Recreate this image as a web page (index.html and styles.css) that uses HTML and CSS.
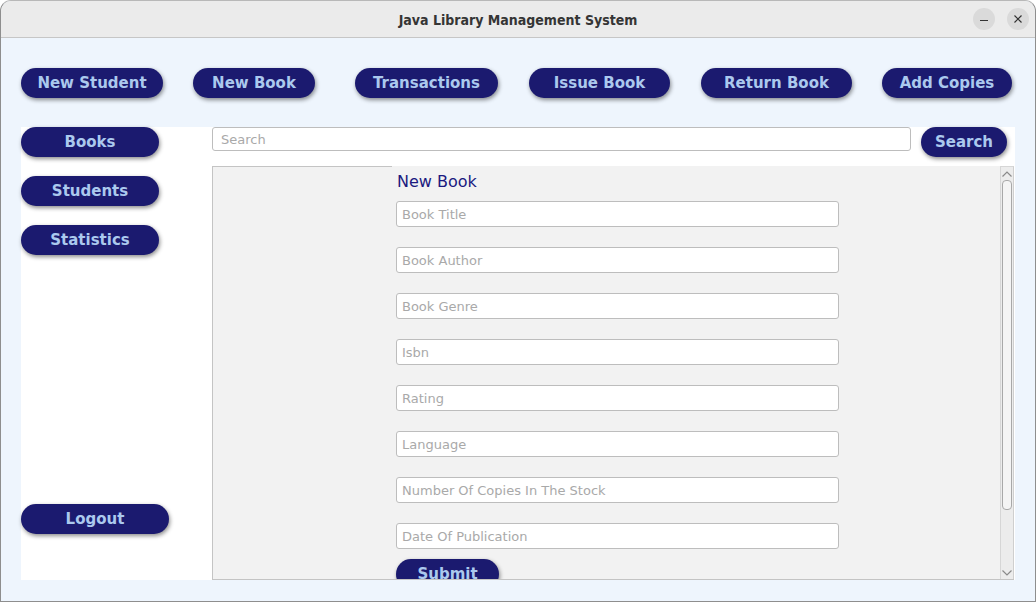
FILE: index.html
```html
<!DOCTYPE html>
<html>
<head>
<meta charset="utf-8">
<title>Java Library Management System</title>
<link rel="stylesheet" href="styles.css">
</head>
<body>
<div class="window">
  <div class="titlebar">
    <div class="title">Java Library Management System</div>
    <div class="winbtns">
      <span class="winbtn"><svg width="22" height="22" viewBox="0 0 22 22"><path d="M7 12.5h8" stroke="#333" stroke-width="1.2"/></svg></span>
      <span class="winbtn"><svg width="22" height="22" viewBox="0 0 22 22"><path d="M7.5 7.5l7 7M14.5 7.5l-7 7" stroke="#333" stroke-width="1.2"/></svg></span>
    </div>
  </div>
  <div class="content">
    <div class="topbar">
      <button class="btn w-student">New Student</button>
      <button class="btn w-book">New Book</button>
      <button class="btn w-trans">Transactions</button>
      <button class="btn w-issue">Issue Book</button>
      <button class="btn w-return">Return Book</button>
      <button class="btn w-copies">Add Copies</button>
    </div>
    <div class="panel">
      <div class="sidebar">
        <div class="side-top">
          <button class="btn w-side">Books</button>
          <button class="btn w-side">Students</button>
          <button class="btn w-side">Statistics</button>
        </div>
        <button class="btn w-logout">Logout</button>
      </div>
      <div class="main">
        <div class="search-row">
          <input class="search" type="text" placeholder="Search">
          <button class="btn w-search">Search</button>
        </div>
        <div class="pane">
          <div class="pane-left"></div>
          <div class="form">
            <div class="form-title">New Book</div>
            <input class="field" type="text" placeholder="Book Title">
            <input class="field" type="text" placeholder="Book Author">
            <input class="field" type="text" placeholder="Book Genre">
            <input class="field" type="text" placeholder="Isbn">
            <input class="field" type="text" placeholder="Rating">
            <input class="field" type="text" placeholder="Language">
            <input class="field" type="text" placeholder="Number Of Copies In The Stock">
            <input class="field" type="text" placeholder="Date Of Publication">
            <button class="btn w-submit">Submit</button>
          </div>
          <div class="scrollbar">
            <div class="arrow"><svg width="12" height="8" viewBox="0 0 12 8"><path d="M1.5 6.5L6 2l4.5 4.5" fill="none" stroke="#8a8a8a" stroke-width="1.2"/></svg></div>
            <div class="track"><div class="thumb"></div></div>
            <div class="arrow"><svg width="12" height="8" viewBox="0 0 12 8"><path d="M1.5 1.5L6 6l4.5-4.5" fill="none" stroke="#8a8a8a" stroke-width="1.2"/></svg></div>
          </div>
        </div>
      </div>
    </div>
  </div>
</div>
</body>
</html>
```

FILE: styles.css
```css
* { box-sizing: border-box; }
html, body { margin: 0; padding: 0; background: #ffffff; }
body { width: 1036px; height: 602px; overflow: hidden; font-family: "DejaVu Sans", sans-serif; }

.window {
  width: 1036px; height: 602px;
  display: flex; flex-direction: column;
  border: 1px solid #8e8e8e; border-top-color: #b8b8b8;
  border-radius: 11px 11px 0 0;
  overflow: hidden;
  background: #eef5fd;
}
.titlebar {
  height: 37px; flex: none;
  background: #ebebeb;
  border-bottom: 1px solid #c6c6c6;
  position: relative;
  display: flex; align-items: center; justify-content: center;
}
.title {
  font-family: "DejaVu Sans", sans-serif;
  font-stretch: condensed;
  font-weight: bold; font-size: 14px; color: #353535;
  margin-top: 1px;
}
.winbtns {
  position: absolute; right: 6px; top: 7px;
  display: flex; gap: 12px;
}
.winbtn {
  width: 22px; height: 22px; border-radius: 50%;
  background: #dadada; display: block;
}
.winbtn svg { display: block; }

.content { flex: 1; display: flex; flex-direction: column; padding: 30px 0 0 20px; }

.btn {
  height: 30px; border: none; border-radius: 15px;
  background: #1b1a6f; color: #abc9ee;
  font-family: "DejaVu Sans", sans-serif; font-weight: bold; font-size: 15px;
  padding: 0; box-shadow: 1px 2px 4px rgba(0,0,0,0.45);
  flex: none;
}
.topbar { display: flex; gap: 30px; height: 30px; }
.w-student { width: 142px; }
.w-book { width: 122px; }
.w-trans { width: 143px; margin-left: 10px; }
.w-issue { width: 141px; margin-left: 1px; }
.w-return { width: 151px; margin-left: 1px; }
.w-copies { width: 130px; }

.panel {
  margin-top: 29px; width: 994px; height: 453px;
  background: #ffffff; display: flex;
}
.sidebar {
  width: 191px; flex: none;
  display: flex; flex-direction: column; justify-content: space-between;
  padding-bottom: 46px;
}
.side-top { display: flex; flex-direction: column; gap: 19px; }
.w-side { width: 138px; }
.w-logout { width: 148px; }

.main { flex: 1; display: flex; flex-direction: column; }
.search-row { display: flex; gap: 10px; height: 30px; align-items: flex-start; }
.search {
  width: 699px; height: 24px;
  border: 1px solid #bdbdbd; border-radius: 3px; background: #fff;
  font-family: "DejaVu Sans", sans-serif; font-size: 13px; padding: 0 8px;
  outline: none;
}
.w-search { width: 86px; }
input::placeholder { color: #a9a9a9; }

.pane {
  margin-top: 9px; width: 802px; height: 415px;
  background: #f2f2f2;
  border-left: 1px solid #c4c4c4; border-bottom: 1px solid #c4c4c4;
  display: flex; overflow: hidden;
}
.pane-left { width: 179px; flex: none; border-top: 1px solid #c4c4c4; }
.form {
  flex: 1; background: #f2f2f2;
  padding: 6px 0 0 4px;
  display: flex; flex-direction: column; align-items: flex-start;
}
.form-title { font-size: 16px; color: #1b1a80; height: 20px; line-height: 20px; margin-left: 1px; }
.field {
  width: 443px; height: 26px; flex: none;
  border: 1px solid #bdbdbd; border-radius: 3px; background: #fff;
  font-family: "DejaVu Sans", sans-serif; font-size: 13px; padding: 0 5px;
  margin-top: 20px; outline: none;
}
.form-title + .field { margin-top: 9px; }
.w-submit { width: 103px; margin-top: 10px; }

.scrollbar {
  width: 14px; flex: none;
  background: #ececec;
  border-top: 1px solid #d6d6d6;
  border-left: 1px solid #d6d6d6; border-right: 1px solid #cfcfcf;
  display: flex; flex-direction: column;
}
.arrow { height: 13px; display: flex; align-items: center; justify-content: center; flex: none; }
.arrow svg { display: block; }
.track { flex: 1; padding: 0 1px; }
.thumb {
  height: 330px; background: #f4f4f4;
  border: 1px solid #a8a8a8; border-radius: 4px;
}
```
